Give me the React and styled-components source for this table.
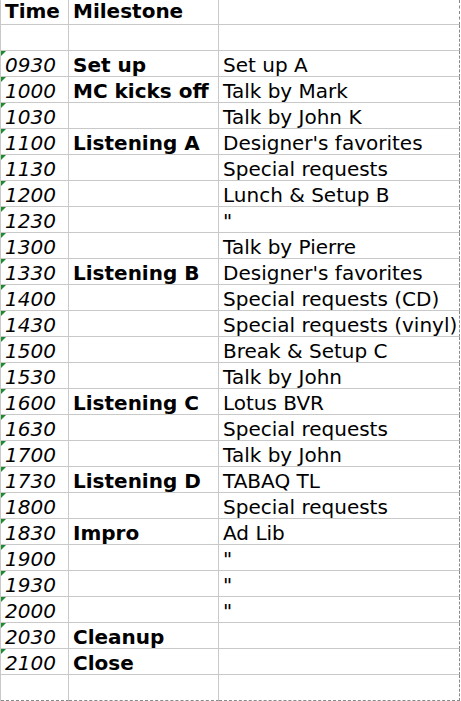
import React from "react";
import styled, { createGlobalStyle } from "styled-components";

const rows = [
  ["", "", ""],
  ["0930", "Set up", "Set up A"],
  ["1000", "MC kicks off", "Talk by Mark"],
  ["1030", "", "Talk by John K"],
  ["1100", "Listening A", "Designer's favorites"],
  ["1130", "", "Special requests"],
  ["1200", "", "Lunch & Setup B"],
  ["1230", "", "\""],
  ["1300", "", "Talk by Pierre"],
  ["1330", "Listening B", "Designer's favorites"],
  ["1400", "", "Special requests (CD)"],
  ["1430", "", "Special requests (vinyl)"],
  ["1500", "", "Break & Setup C"],
  ["1530", "", "Talk by John"],
  ["1600", "Listening C", "Lotus BVR"],
  ["1630", "", "Special requests"],
  ["1700", "", "Talk by John"],
  ["1730", "Listening D", "TABAQ TL"],
  ["1800", "", "Special requests"],
  ["1830", "Impro", "Ad Lib"],
  ["1900", "", "\""],
  ["1930", "", "\""],
  ["2000", "", "\""],
  ["2030", "Cleanup", ""],
  ["2100", "Close", ""],
  ["", "", ""],
];

const GlobalStyle = createGlobalStyle`
  body {
    margin: 0;
    background: #fff;
    font-family: "DejaVu Sans", Verdana, sans-serif;
    color: #000;
  }
`;

const Sheet = styled.div`
  display: grid;
  grid-template-columns: 68px 150px 241px;
  width: 460px;
  border-left: 1px solid #c9c9c9;
  box-sizing: border-box;
`;

const Cell = styled.div`
  position: relative;
  box-sizing: border-box;
  height: ${(p) => (p.$header ? 25 : 26)}px;
  padding: ${(p) => (p.$header ? 0 : 4)}px 0 0 4px;
  font-size: 20px;
  line-height: ${(p) => (p.$header ? 23 : 21)}px;
  white-space: nowrap;
  font-weight: ${(p) => (p.$bold ? "bold" : "normal")};
  font-style: ${(p) => (p.$italic ? "italic" : "normal")};
  border-bottom: 1px ${(p) => (p.$last ? "dashed #888" : "solid #c9c9c9")};
  border-right: 1px ${(p) => (p.$edge ? "dashed #888" : "solid #c9c9c9")};
`;

const Flag = styled.span`
  position: absolute;
  left: 0;
  top: 0;
  width: 0;
  height: 0;
  border-top: 5px solid #1f8a2e;
  border-right: 5px solid transparent;
`;

export default function App() {
  return (
    <>
      <GlobalStyle />
      <Sheet>
        <Cell $header $bold>Time</Cell>
        <Cell $header $bold>Milestone</Cell>
        <Cell $header $edge />
        {rows.map(([time, milestone, note], i) => {
          const last = i === rows.length - 1;
          return (
            <React.Fragment key={i}>
              <Cell $italic $last={last}>
                {time && <Flag />}
                {time}
              </Cell>
              <Cell $bold $last={last}>{milestone}</Cell>
              <Cell $edge $last={last}>{note}</Cell>
            </React.Fragment>
          );
        })}
      </Sheet>
    </>
  );
}
